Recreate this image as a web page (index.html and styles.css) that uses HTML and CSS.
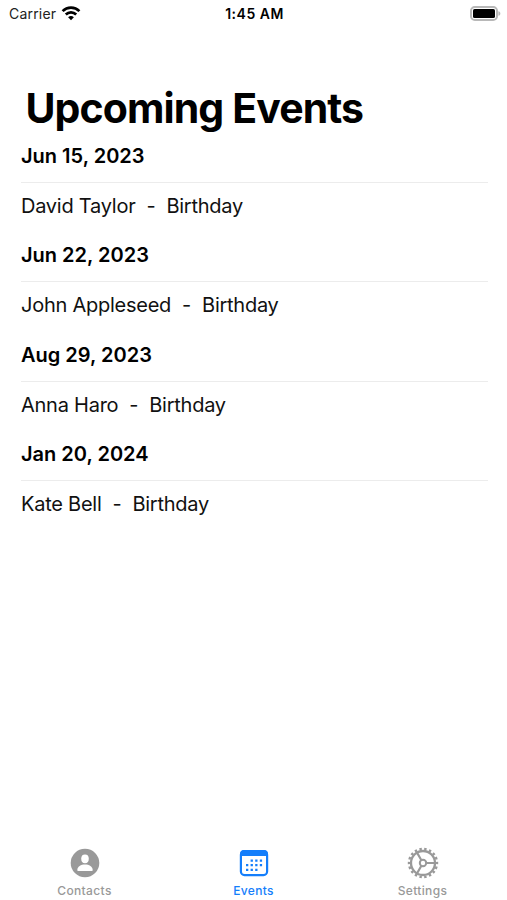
FILE: index.html
```html
<!DOCTYPE html>
<html lang="en">
<head>
    <meta charset="UTF-8">
    <meta name="viewport" content="width=device-width, initial-scale=1.0">
    <title>Upcoming Events</title>
    <link rel="stylesheet" href="styles.css">
</head>
<body>
    <header class="status-bar">
        <div class="status-left">
            <span class="carrier">Carrier</span>
            <svg class="wifi" width="20" height="15" viewBox="0 0 20 15" fill="none" stroke="#000" stroke-width="2.7">
                <path d="M1.6 5.1a11.9 11.9 0 0 1 16.8 0"/>
                <path d="M4.8 8.5a7.4 7.4 0 0 1 10.4 0"/>
                <path d="M10 14.3 7.1 11.3a4.2 4.2 0 0 1 5.8 0z" fill="#000" stroke="none"/>
            </svg>
        </div>
        <span class="time">1:45 AM</span>
        <svg class="battery" width="31" height="15" viewBox="0 0 31 15">
            <rect x="1" y="1" width="26" height="13" rx="3.8" fill="#fff" stroke="#b8b8b8" stroke-width="2"/>
            <rect x="3" y="3" width="22" height="9" rx="1.6" fill="#000"/>
            <path d="M28.4 5.2c2.6.6 2.6 4 0 4.6z" fill="#b8b8b8"/>
        </svg>
    </header>

    <main class="content">
        <h1 class="page-title">Upcoming Events</h1>
        <section class="event">
            <h2 class="event-date">Jun 15, 2023</h2>
            <p class="event-name"><span>David Taylor</span><span>-</span><span>Birthday</span></p>
        </section>
        <section class="event">
            <h2 class="event-date">Jun 22, 2023</h2>
            <p class="event-name"><span>John Appleseed</span><span>-</span><span>Birthday</span></p>
        </section>
        <section class="event">
            <h2 class="event-date">Aug 29, 2023</h2>
            <p class="event-name"><span>Anna Haro</span><span>-</span><span>Birthday</span></p>
        </section>
        <section class="event">
            <h2 class="event-date">Jan 20, 2024</h2>
            <p class="event-name"><span>Kate Bell</span><span>-</span><span>Birthday</span></p>
        </section>
    </main>

    <nav class="tab-bar">
        <a class="tab">
            <svg width="32" height="32" viewBox="0 0 32 32">
                <circle cx="16" cy="16" r="14.3" fill="#999"/>
                <ellipse cx="16" cy="11.8" rx="3.8" ry="4.4" fill="#fff"/>
                <path d="M8.3 23.2c0-3.6 3.6-5.6 7.7-5.6s7.7 2 7.7 5.6c0 .5-.3.8-.8.8H9.1c-.5 0-.8-.3-.8-.8z" fill="#fff"/>
            </svg>
            <span>Contacts</span>
        </a>
        <a class="tab active">
            <svg width="32" height="32" viewBox="0 0 32 32">
                <rect x="2.9" y="4.1" width="26.2" height="24" rx="3.6" fill="#fff" stroke="#147efb" stroke-width="2.2"/>
                <path d="M2 9V7a4 4 0 0 1 4-4h20a4 4 0 0 1 4 4v2z" fill="#147efb"/>
                <g stroke="#147efb" stroke-width="2.3" stroke-dasharray="2.3 2.3">
                    <path d="M12.6 13.6h11.6"/>
                    <path d="M8 18.2h16.2"/>
                    <path d="M8 22.8h11.6"/>
                </g>
            </svg>
            <span>Events</span>
        </a>
        <a class="tab">
            <svg width="32" height="32" viewBox="0 0 32 32" fill="none" stroke="#999">
                <circle cx="16" cy="16" r="12" stroke-width="2.3"/>
                <!-- 18 teeth around the rim -->
                <circle cx="16" cy="16" r="14" stroke-width="2.4" pathLength="72" stroke-dasharray="2 2" stroke-dashoffset="1"/>
                <circle cx="16" cy="16" r="3.2" stroke-width="2"/>
                <path d="M19.2 16H28M14.4 13.2 10 5.6M14.4 18.8 10 26.4" stroke-width="2.1"/>
            </svg>
            <span>Settings</span>
        </a>
    </nav>
</body>
</html>
```

FILE: styles.css
```css
* {
    box-sizing: border-box;
}

body {
    margin: 0;
    height: 900px;
    display: flex;
    flex-direction: column;
    overflow: hidden;
    background: #fff;
    color: #000;
    font-family: Inter, "Liberation Sans", sans-serif;
}

.status-bar {
    display: grid;
    grid-template-columns: 1fr auto 1fr;
    align-items: center;
    height: 27px;
    padding: 0 6px 0 8px;
    font-size: 14px;
}

.status-left {
    display: flex;
    align-items: center;
    gap: 5px;
    padding-left: 1px;
}

.carrier {
    color: #222;
    letter-spacing: 0.2px;
}

.time {
    font-weight: 600;
    letter-spacing: 0.5px;
}

.battery {
    justify-self: end;
}

.content {
    flex: 1;
    padding: 57px 19px 0 21px;
}

.page-title {
    margin: 0 0 0 4.5px;
    font-size: 41px;
    line-height: 48px;
    font-weight: 700;
    letter-spacing: -0.9px;
}

.event {
    height: 99.4px;
}

.event-date {
    margin: 0;
    height: 51px;
    border-bottom: 1px solid #ececec;
    font-size: 20px;
    line-height: 48px;
    font-weight: 600;
}

.event-name {
    display: flex;
    gap: 11px;
    margin: 0;
    font-size: 20px;
    line-height: 46px;
    letter-spacing: -0.25px;
    color: #111;
}

.tab-bar {
    display: grid;
    grid-template-columns: repeat(3, 1fr);
    height: 53px;
}

.tab {
    display: flex;
    flex-direction: column;
    align-items: center;
    gap: 4px;
    font-size: 12px;
    line-height: 16px;
    font-weight: 500;
    letter-spacing: 0.35px;
    color: #999;
}

.tab.active {
    color: #147efb;
}
```
